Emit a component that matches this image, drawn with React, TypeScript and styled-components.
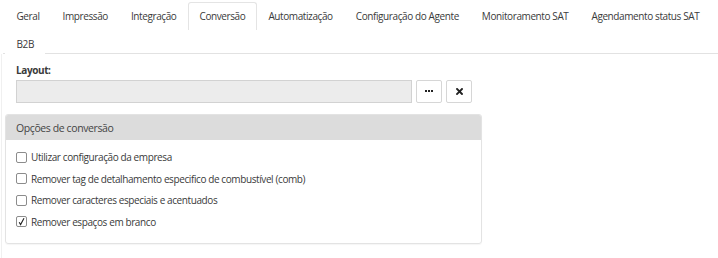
import React from "react";
import styled, { createGlobalStyle } from "styled-components";

const GlobalStyle = createGlobalStyle`
  html, body {
    margin: 0;
    padding: 0;
    background: #fff;
  }
  body {
    font-family: "Open Sans", "Noto Sans", sans-serif;
    font-size: 10px;
    letter-spacing: -0.4px;
    color: #3a3a3a;
  }
`;

const Page = styled.div`
  padding: 2px 0 0 3px;
`;

const TabBar = styled.ul`
  list-style: none;
  margin: 0;
  padding: 0 0 0 2px;
  display: flex;
  flex-wrap: wrap;
  border-bottom: 1px solid #e2e2e2;
  height: 52px;
  box-sizing: border-box;
`;

const Tab = styled.li<{ $active?: boolean }>`
  height: 26px;
  line-height: 26px;
  padding: 0 10.5px;
  box-sizing: border-box;
  white-space: nowrap;
  border: 1px solid ${(p) => (p.$active ? "#e4e4e4" : "transparent")};
  border-bottom: none;
  border-radius: 3px 3px 0 0;
  background: #fff;
  ${(p) => p.$active && "height: 28px;"}
`;

const Body = styled.div`
  margin-left: -2px;
  border-left: 1px solid #f0f0f0;
  padding: 9px 0 15px 14px;
`;

const Label = styled.div`
  font-weight: 700;
  margin-bottom: 3px;
  height: 14px;
  line-height: 14px;
`;

const FieldRow = styled.div`
  display: flex;
  gap: 4px;
  align-items: flex-start;
`;

const Input = styled.div`
  width: 396px;
  height: 23px;
  box-sizing: border-box;
  background: #ececec;
  border: 1px solid #d2d2d2;
`;

const IconButton = styled.div`
  width: 26px;
  height: 23px;
  box-sizing: border-box;
  border: 1px solid #d6d6d6;
  border-radius: 2px;
  background: #fff;
  display: flex;
  align-items: center;
  justify-content: center;
  color: #222;
`;

const Panel = styled.div`
  margin: 11px 0 0 -11px;
  width: 475px;
  border: 1px solid #e3e3e3;
  border-radius: 3px;
  box-shadow: 0 1px 1px rgba(0, 0, 0, 0.04);
  overflow: hidden;
`;

const PanelHeader = styled.div`
  height: 25px;
  line-height: 26px;
  background: #dcdcdc;
  padding-left: 10px;
  font-size: 10.5px;
  color: #444;
`;

const PanelBody = styled.div`
  padding: 10px 10px 14px 10px;
  display: flex;
  flex-direction: column;
  gap: 7px;
`;

const CheckRow = styled.label`
  display: flex;
  align-items: center;
  gap: 4px;
  height: 14.5px;
`;

const Box = styled.span`
  width: 11px;
  height: 11px;
  box-sizing: border-box;
  border: 1px solid #8c8c8c;
  border-radius: 2px;
  background: #fff;
  display: inline-flex;
  align-items: center;
  justify-content: center;
`;

const tabs = [
  "Geral",
  "Impressão",
  "Integração",
  "Conversão",
  "Automatização",
  "Configuração do Agente",
  "Monitoramento SAT",
  "Agendamento status SAT",
  "B2B",
];

const options = [
  { text: "Utilizar configuração da empresa", checked: false },
  { text: "Remover tag de detalhamento especifico de combustível (comb)", checked: false },
  { text: "Remover caracteres especiais e acentuados", checked: false },
  { text: "Remover espaços em branco", checked: true },
];

const App = () => {
  return (
    <Page>
      <GlobalStyle />
      <TabBar>
        {tabs.map((t) => (
          <Tab key={t} $active={t === "Conversão"}>
            {t}
          </Tab>
        ))}
      </TabBar>
      <Body>
        <Label>Layout:</Label>
        <FieldRow>
          <Input />
          <IconButton>
            <svg width="8" height="3" viewBox="0 0 8 3">
              <rect x="0" y="0" width="2" height="2" fill="#222" />
              <rect x="3" y="0" width="2" height="2" fill="#222" />
              <rect x="6" y="0" width="2" height="2" fill="#222" />
            </svg>
          </IconButton>
          <IconButton>
            <svg width="7" height="7" viewBox="0 0 7 7">
              <path d="M1 1 L6 6 M6 1 L1 6" stroke="#222" strokeWidth="1.9" strokeLinecap="square" />
            </svg>
          </IconButton>
        </FieldRow>
        <Panel>
          <PanelHeader>Opções de conversão</PanelHeader>
          <PanelBody>
            {options.map((o) => (
              <CheckRow key={o.text}>
                <Box>
                  {o.checked && (
                    <svg width="9" height="9" viewBox="0 0 9 9">
                      <path d="M2.2 5.2 L3.6 7.6 L7 1.2" stroke="#222" strokeWidth="1.1" fill="none" />
                    </svg>
                  )}
                </Box>
                {o.text}
              </CheckRow>
            ))}
          </PanelBody>
        </Panel>
      </Body>
    </Page>
  );
};

export default App;
